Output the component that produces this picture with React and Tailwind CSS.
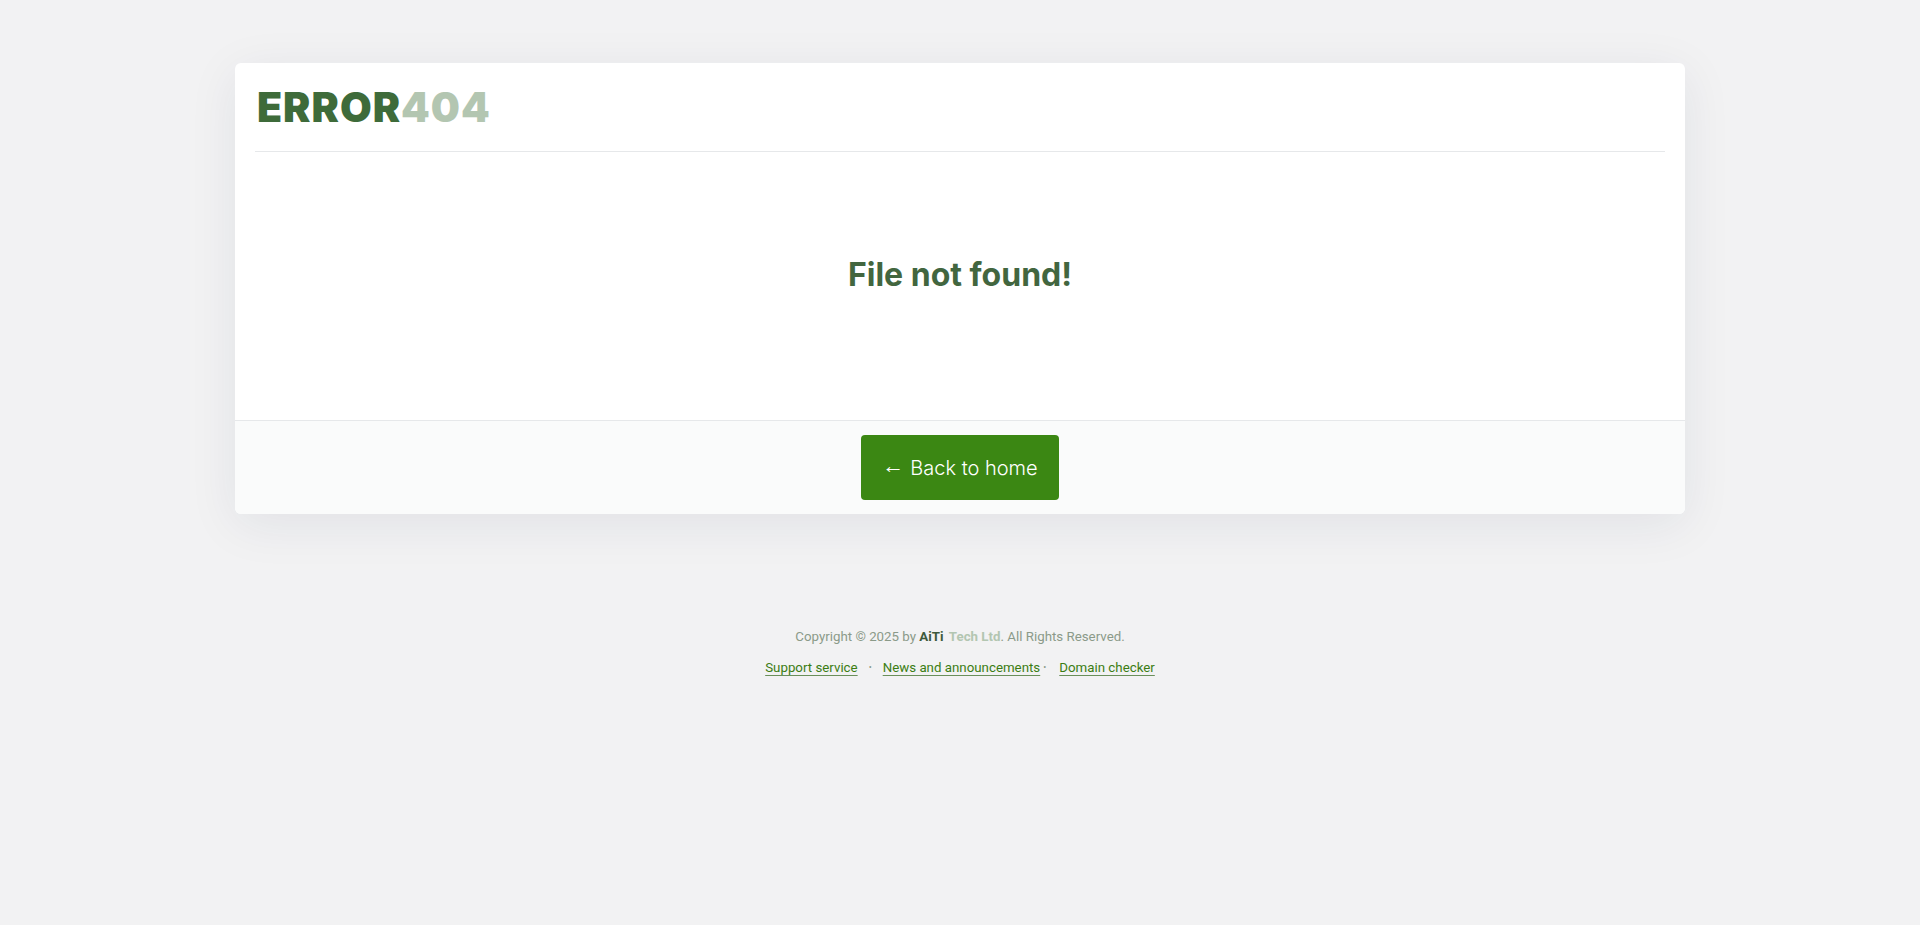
import React from 'react';

export default function App() {
    const links = ['Support service', 'News and announcements', 'Domain checker'];

    return (
        <div
            className="min-h-[925px] w-full bg-[#f2f2f3] pt-[63px]"
            style={{ fontFamily: 'Inter, "Noto Sans", sans-serif' }}
        >
            <div className="mx-auto w-[1450px] rounded-md bg-white shadow-[0_10px_50px_rgba(30,40,80,0.08)]">
                <div className="px-[20px]">
                    <div className="flex h-[89px] items-center border-b border-[#e6e8ea] pl-[2px]">
                        <h1 className="text-[41px] font-black leading-none tracking-[1px]">
                            <span className="text-[#3e6b3a]">ERROR</span>
                            <span className="text-[#b3c6b1]">404</span>
                        </h1>
                    </div>
                </div>

                <div className="flex h-[268px] items-start justify-center pt-[107px]">
                    <h2 className="text-[32px] font-bold leading-none text-[#42663f]">File not found!</h2>
                </div>

                <div className="flex h-[94px] items-center justify-center rounded-b-md border-t border-[#e6e8ea] bg-[#fafbfb]">
                    <a
                        href="#"
                        className="flex h-[65px] w-[198px] items-center justify-center rounded-[4px] bg-[#3b8713] text-[20px] font-light leading-none text-white"
                    >
                        <span
                            style={{ fontFamily: '"Liberation Sans", sans-serif' }}
                            className="relative -top-[2px] mr-[6px] text-[22px] leading-none"
                        >
                            ←
                        </span>
                        Back to home
                    </a>
                </div>
            </div>

            <div
                className="mt-[113px] text-center text-[13.3px] text-[#8b9a89]"
                style={{ fontFamily: 'Roboto, sans-serif' }}
            >
                Copyright © 2025 by <b className="font-bold text-[#3e5a3b]">AiTi</b>{' '}
                <b className="ml-[2px] font-bold text-[#b3c6b1]">Tech Ltd</b>. All Rights Reserved.
            </div>

            <div
                className="mt-[11px] flex items-center justify-center text-[13.3px] text-[#3b7d12]"
                style={{ fontFamily: 'Roboto, sans-serif' }}
            >
                <a href="#" className="underline decoration-[#6a8f5a] underline-offset-[3px]">{links[0]}</a>
                <span className="mx-[11px] text-[9px] text-[#8b9a89]">•</span>
                <a href="#" className="underline decoration-[#6a8f5a] underline-offset-[3px]">{links[1]}</a>
                <span className="ml-[3px] mr-[13px] text-[9px] text-[#8b9a89]">•</span>
                <a href="#" className="underline decoration-[#6a8f5a] underline-offset-[3px]">{links[2]}</a>
            </div>
        </div>
    );
}
